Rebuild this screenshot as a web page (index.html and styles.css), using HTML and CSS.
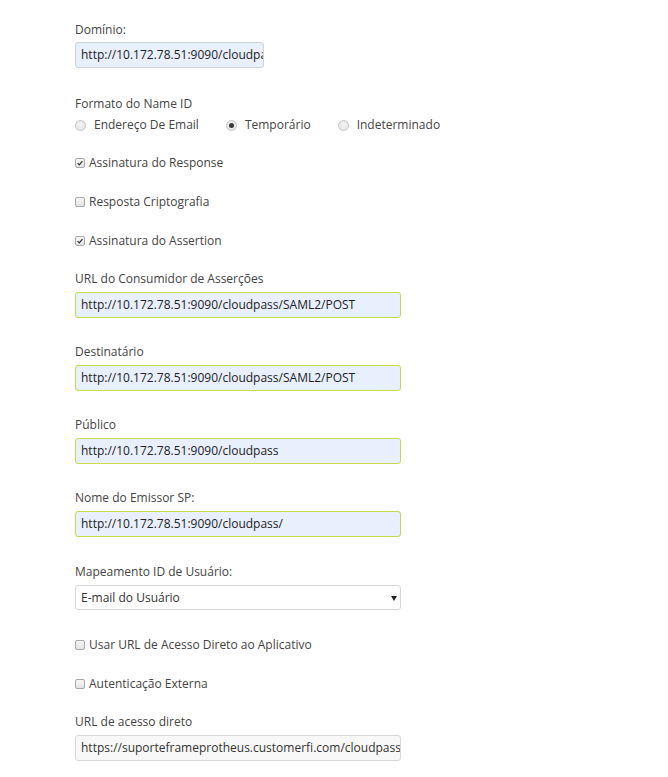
FILE: index.html
```html
<!DOCTYPE html>
<html lang="pt">
<head>
<meta charset="utf-8">
<link rel="stylesheet" href="styles.css">
</head>
<body>
<form class="form">
  <div class="field first">
    <div class="label">Domínio:</div>
    <div class="input autofill short">http://10.172.78.51:9090/cloudpass</div>
  </div>

  <div class="field radios-field">
    <div class="label">Formato do Name ID</div>
    <div class="radios">
      <span class="radio-item"><span class="radio"></span>Endereço De Email</span>
      <span class="radio-item"><span class="radio checked"></span>Temporário</span>
      <span class="radio-item"><span class="radio"></span>Indeterminado</span>
    </div>
  </div>

  <div class="check-row first-check"><span class="checkbox checked"><svg viewBox="0 0 10 10"><path d="M2 5.2 L4.1 7.3 L8 2.6" fill="none" stroke="#333" stroke-width="1.6"/></svg></span>Assinatura do Response</div>
  <div class="check-row"><span class="checkbox"></span>Resposta Criptografia</div>
  <div class="check-row"><span class="checkbox checked"><svg viewBox="0 0 10 10"><path d="M2 5.2 L4.1 7.3 L8 2.6" fill="none" stroke="#333" stroke-width="1.6"/></svg></span>Assinatura do Assertion</div>

  <div class="field after-check">
    <div class="label">URL do Consumidor de Asserções</div>
    <div class="input autofill valid">http://10.172.78.51:9090/cloudpass/SAML2/POST</div>
  </div>
  <div class="field">
    <div class="label">Destinatário</div>
    <div class="input autofill valid">http://10.172.78.51:9090/cloudpass/SAML2/POST</div>
  </div>
  <div class="field">
    <div class="label">Público</div>
    <div class="input autofill valid">http://10.172.78.51:9090/cloudpass</div>
  </div>
  <div class="field">
    <div class="label">Nome do Emissor SP:</div>
    <div class="input autofill valid">http://10.172.78.51:9090/cloudpass/</div>
  </div>
  <div class="field select-field">
    <div class="label">Mapeamento ID de Usuário:</div>
    <div class="input select">E-mail do Usuário<span class="caret"></span></div>
  </div>

  <div class="check-row after-select"><span class="checkbox"></span>Usar URL de Acesso Direto ao Aplicativo</div>
  <div class="check-row"><span class="checkbox"></span>Autenticação Externa</div>

  <div class="field after-check2">
    <div class="label">URL de acesso direto</div>
    <div class="input disabled">https://suporteframeprotheus.customerfi.com/cloudpass</div>
  </div>
</form>
</body>
</html>
```

FILE: styles.css
```css
html, body {
  margin: 0;
  padding: 0;
  background: #ffffff;
}
body {
  font-family: "Open Sans", "Noto Sans", sans-serif;
  font-size: 12px;
  color: #444;
}
.form {
  display: flex;
  flex-direction: column;
  padding: 20px 0 0 75px;
  width: 326px;
}
.field {
  display: flex;
  flex-direction: column;
  margin-top: 24px;
}
.field.first { margin-top: 0; }
.label {
  line-height: 20px;
  height: 20px;
  margin-bottom: 3px;
  color: #444;
  white-space: nowrap;
}
.field.first .label { margin-bottom: 2px; }
.input {
  box-sizing: border-box;
  height: 26px;
  line-height: 24px;
  padding: 0 5px;
  border: 1px solid #d2d2d2;
  border-radius: 3px;
  color: #222;
  white-space: nowrap;
  overflow: hidden;
  width: 326px;
}
.input.short { width: 189px; }
.input.autofill { background: #e8f0fe; }
.input.valid { border-color: #c3dc4c; }
.field.select-field { margin-top: 25px; }
.input.select {
  background: #fff;
  border-color: #d6d6d6;
  height: 25px;
  line-height: 23px;
  position: relative;
  color: #333;
}
.caret {
  position: absolute;
  right: 3px;
  top: 10px;
  width: 0;
  height: 0;
  border-left: 3px solid transparent;
  border-right: 3px solid transparent;
  border-top: 5px solid #222;
}
.input.disabled {
  background: #f8f8f8;
  border-color: #d8d8d8;
  color: #333;
}
.radios-field { margin-top: 26px; }
.radios-field .label { margin-bottom: 1px; }
.radios {
  display: flex;
  align-items: center;
  gap: 27px;
  height: 20px;
  line-height: 20px;
  white-space: nowrap;
}
.radio-item {
  display: flex;
  align-items: center;
  gap: 8px;
  flex: none;
}
.radio {
  box-sizing: border-box;
  width: 11px;
  height: 11px;
  border-radius: 50%;
  border: 1px solid #c4c4c4;
  background: radial-gradient(circle at 50% 40%, #f4f4f4, #e2e2e2);
  display: inline-flex;
  align-items: center;
  justify-content: center;
  flex: none;
}
.radio.checked::after {
  content: "";
  width: 5px;
  height: 5px;
  border-radius: 50%;
  background: #3a3a3a;
}
.check-row {
  display: flex;
  align-items: center;
  gap: 4px;
  height: 20px;
  line-height: 20px;
  margin-top: 19px;
  color: #444;
  white-space: nowrap;
}
.check-row.first-check { margin-top: 18px; }
.check-row.after-select { margin-top: 25px; }
.checkbox {
  box-sizing: border-box;
  width: 10px;
  height: 10px;
  border: 1px solid #a8a8a8;
  border-radius: 2px;
  background: linear-gradient(#f6f6f6, #e4e4e4);
  display: inline-flex;
  flex: none;
}
.checkbox svg {
  width: 8px;
  height: 8px;
}
.after-check { margin-top: 18px; }
.after-check2 { margin-top: 18px; }
```
